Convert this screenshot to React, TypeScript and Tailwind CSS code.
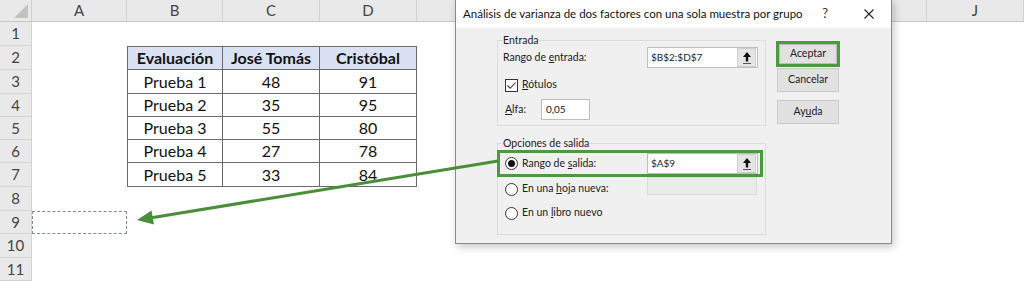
import React from 'react';

const columns = [
  { label: 'A', w: 'w-[95px]' },
  { label: 'B', w: 'w-[96px]' },
  { label: 'C', w: 'w-[97px]' },
  { label: 'D', w: 'w-[97px]' },
  { label: '', w: 'w-[102px]' },
  { label: '', w: 'w-[102px]' },
  { label: '', w: 'w-[102px]' },
  { label: '', w: 'w-[102px]' },
  { label: '', w: 'w-[102px]' },
  { label: 'J', w: 'flex-1' },
];

const rowHeights = ['h-[24px]', 'h-[24px]', 'h-[24px]', 'h-[23px]', 'h-[23px]', 'h-[23px]', 'h-[24px]', 'h-[24px]', 'h-[23px]', 'h-[24px]', 'h-[23px]'];

const table = [
  ['Evaluación', 'José Tomás', 'Cristóbal'],
  ['Prueba 1', '48', '91'],
  ['Prueba 2', '35', '95'],
  ['Prueba 3', '55', '80'],
  ['Prueba 4', '27', '78'],
  ['Prueba 5', '33', '84'],
];

const cellWidths = ['w-[96px]', 'w-[97px]', 'w-[97px]'];

const UpButton = () => (
  <div className="w-[19px] h-[19px] bg-[#e5e5e5] border border-[#cfcfcf] flex items-center justify-center">
    <svg width="10" height="14" viewBox="0 0 10 14">
      <path d="M5 1 L9 6 L6.2 6 L6.2 10.5 L3.8 10.5 L3.8 6 L1 6 Z" fill="#111" />
      <rect x="1" y="12" width="8" height="1" fill="#555" />
    </svg>
  </div>
);

const RefInput = ({ value }: { value: string }) => (
  <div className="w-[111px] h-[21px] bg-white border border-[#bdbdbd] flex items-center justify-between pl-[3px] pr-px">
    <span className="text-[10px] text-[#222]">{value}</span>
    <UpButton />
  </div>
);

const Radio = ({ on }: { on?: boolean }) => (
  <div className="w-[13px] h-[13px] rounded-full border border-[#333] bg-white flex items-center justify-center">
    {on && <div className="w-[7px] h-[7px] rounded-full bg-[#111]" />}
  </div>
);

const DlgButton = ({ children }: { children: React.ReactNode }) => (
  <div className="w-[62px] h-[24px] bg-[#e1e1e1] border border-[#c9c9c9] flex items-center justify-center text-[10.5px] text-[#222]">
    {children}
  </div>
);

const App = () => {
  return (
    <div className="relative w-[1024px] h-[281px] overflow-hidden bg-white font-['Lato',sans-serif]">
      {/* column headers */}
      <div className="flex h-[22px] bg-[#e9e9e9] border-b border-[#c6c6c6]">
        <div className="w-[32px] border-r border-[#cfcfcf] flex items-end justify-end pr-[3px] pb-[3px]">
          <svg width="14" height="14" viewBox="0 0 14 14">
            <polygon points="14,0 14,14 0,14" fill="#c2c2c2" />
          </svg>
        </div>
        {columns.map((c, i) => (
          <div
            key={i}
            className={`${c.w} border-r border-[#d3d3d3] flex items-center justify-center text-[15px] text-[#444]`}
          >
            {c.label}
          </div>
        ))}
      </div>

      {/* rows */}
      <div className="flex flex-col">
        {rowHeights.map((h, i) => {
          const r = i + 1;
          const t = r >= 2 && r <= 7 ? table[r - 2] : null;
          return (
            <div key={r} className={`flex ${h}`}>
              <div className="w-[32px] bg-[#e9e9e9] border-r border-b border-[#d3d3d3] flex items-center justify-center text-[15px] text-[#444]">
                {r}
              </div>
              <div className="w-[95px] flex">
                {r === 9 && <div className="flex-1 border border-dashed border-[#7d8f86]" />}
              </div>
              {t ? (
                t.map((v, j) => (
                  <div
                    key={j}
                    className={`${cellWidths[j]} border-b border-r border-[#6a6a6a] flex items-center justify-center text-[16px] text-[#111] ${
                      j === 0 ? 'border-l' : ''
                    } ${r === 2 ? 'border-t bg-[#d9e1f2] font-bold text-[15.5px]' : ''}`}
                  >
                    {v}
                  </div>
                ))
              ) : null}
              <div className="flex-1" />
            </div>
          );
        })}
      </div>

      {/* dialog window */}
      <div className="absolute left-[455px] top-[-1px] w-[437px] h-[245px] bg-[#f0f0f0] border border-[#8a8a8a] shadow-[2px_3px_8px_rgba(0,0,0,0.22)] flex flex-col font-['Lato',sans-serif] text-[#222]">
        <div className="h-[28px] bg-white flex items-center pl-[7px] whitespace-nowrap">
          <span className="text-[11.5px] text-[#111]">
            Análisis de varianza de dos factores con una sola muestra por grupo
          </span>
          <span className="ml-auto text-[13px] text-[#333]">?</span>
          <svg width="10" height="10" viewBox="0 0 10 10" className="shrink-0 ml-[36px] mr-[17px]">
            <path d="M0.5 0.5 L9.5 9.5 M9.5 0.5 L0.5 9.5" stroke="#222" strokeWidth="1.1" />
          </svg>
        </div>

        <div className="flex pl-[41px] pt-[5px]">
          <div className="w-[269px] flex flex-col">
            <fieldset className="border border-[#dcdcdc] px-[5px] pb-[5px]">
              <legend className="text-[10.5px] leading-[14px] px-0">Entrada</legend>
              <div className="flex items-center">
                <span className="w-[144px] text-[10.5px]">
                  Rango de <u>e</u>ntrada:
                </span>
                <RefInput value="$B$2:$D$7" />
              </div>
              <div className="flex items-center mt-[9px] pl-[2px] h-[16px]">
                <div className="w-[13px] h-[13px] border border-[#333] bg-white flex items-center justify-center">
                  <svg width="11" height="11" viewBox="0 0 11 11">
                    <path d="M1.5 5.5 L4.2 8.3 L9.5 2.5" fill="none" stroke="#333" strokeWidth="1.1" />
                  </svg>
                </div>
                <span className="ml-[4px] text-[10.5px]">
                  <u>R</u>ótulos
                </span>
              </div>
              <div className="flex items-center mt-[6px] pl-[2px]">
                <span className="w-[36px] text-[10.5px]">
                  <u>A</u>lfa:
                </span>
                <div className="w-[49px] h-[21px] bg-white border border-[#bdbdbd] flex items-center pl-[4px] text-[10px]">
                  0,05
                </div>
              </div>
            </fieldset>

            <fieldset className="mt-[10px] border border-[#dcdcdc] pb-[9px]">
              <legend className="ml-[5px] text-[10.5px] leading-[14px] px-0">Opciones de salida</legend>
              <div className="ml-[-1px] w-[266px] h-[27px] border-[3px] border-[#4b9a3f] flex items-center pl-[5px]">
                <div className="w-[142px] flex items-center">
                  <Radio on />
                  <span className="ml-[4px] text-[10.5px]">
                    Rango de <u>s</u>alida:
                  </span>
                </div>
                <RefInput value="$A$9" />
              </div>
              <div className="flex items-start pl-[7px] h-[24px]">
                <div className="w-[142px] h-[24px] flex items-center">
                  <Radio />
                  <span className="ml-[4px] text-[10.5px]">
                    En una <u>h</u>oja nueva:
                  </span>
                </div>
                <div className="w-[110px] h-[18px] bg-[#ebebeb] border border-[#dadada]" />
              </div>
              <div className="flex items-center pl-[7px] h-[24px]">
                <Radio />
                <span className="ml-[4px] text-[10.5px]">
                  En un <u>l</u>ibro nuevo
                </span>
              </div>
            </fieldset>
          </div>

          <div className="ml-[10px] mt-[8px] flex flex-col">
            <div className="w-[64px] h-[26px] border-[3px] border-[#4b9a3f] flex">
              <div className="flex-1 bg-[#e1e1e1] border border-[#bcbcbc] flex items-center justify-center text-[10.5px] text-[#222]">
                Aceptar
              </div>
            </div>
            <div className="ml-px mt-px">
              <DlgButton>Cancelar</DlgButton>
            </div>
            <div className="ml-px mt-[8px]">
              <DlgButton>
                Ay<u>u</u>da
              </DlgButton>
            </div>
          </div>
        </div>
      </div>

      {/* annotation arrow */}
      <svg className="absolute left-0 top-0 pointer-events-none" width="1024" height="281" viewBox="0 0 1024 281">
        <line x1="498" y1="161" x2="150" y2="218" stroke="#4a8e3a" strokeWidth="3" />
        <polygon points="137,220 154,224.5 151.5,210.5" fill="#4a8e3a" />
      </svg>
    </div>
  );
};

export default App;
